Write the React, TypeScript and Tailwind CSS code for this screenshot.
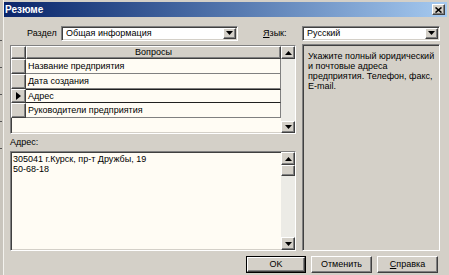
import React from 'react';

const sunken =
  'border border-t-[#808080] border-l-[#808080] border-b-white border-r-white shadow-[inset_1px_1px_0_#404040,inset_-1px_-1px_0_#d4d0c8]';
const raised =
  'border border-t-[#ffffff] border-l-[#ffffff] border-b-[#404040] border-r-[#404040] shadow-[inset_-1px_-1px_0_#808080]';

const Arrow: React.FC<{ dir: 'up' | 'down' }> = ({ dir }) => (
  <svg width="7" height="4" viewBox="0 0 7 4">
    {dir === 'down' ? <polygon points="0,0 7,0 3.5,4" fill="#000" /> : <polygon points="0,4 7,4 3.5,0" fill="#000" />}
  </svg>
);

const ArrowButton: React.FC<{ dir: 'up' | 'down'; className?: string }> = ({ dir, className = '' }) => (
  <div className={`bg-[#d4d0c8] flex items-center justify-center ${raised} ${className}`}>
    <Arrow dir={dir} />
  </div>
);

const Combo: React.FC<{ value: string; width: string }> = ({ value, width }) => (
  <div className={`${width} h-[15px] bg-white flex items-center ${sunken}`}>
    <span className="flex-1 pl-[4px] leading-none">{value}</span>
    <ArrowButton dir="down" className="w-[13px] h-[11px] mr-[1px]" />
  </div>
);

const questions = ['Название предприятия', 'Дата создания', 'Адрес', 'Руководители предприятия'];
const rowHeights = ['h-[15px]', 'h-[15px]', 'h-[14px]', 'h-[15px]'];
const hint = ['Укажите полный юридический', 'и почтовые адреса', 'предприятия. Телефон, факс,', 'E-mail.'];

export default function App() {
  return (
    <div className="w-[449px] h-[275px] flex bg-[#d4d0c8] overflow-hidden text-[9px] text-black font-['Liberation_Sans',Arial,sans-serif]">
      {/* edge of the window behind */}
      <div className="w-[3px] bg-[#c9c5bd] flex flex-col items-start pt-[40px] gap-[26px]">
        <div className="w-[2px] h-[1px] bg-[#555]" />
        <div className="w-[2px] h-[1px] bg-[#555]" />
        <div className="w-[2px] h-[1px] bg-[#555]" />
        <div className="w-[2px] h-[1px] bg-[#555]" />
        <div className="w-[2px] h-[1px] bg-[#555]" />
      </div>

      <div className="flex-1 flex flex-col border-l border-l-[#f4f3ef] pt-[2px]">
        {/* title bar */}
        <div className="h-[15px] mr-[2px] flex items-center justify-between bg-gradient-to-r from-[#0a246a] to-[#a6caf0]">
          <span className="pl-[1px] text-white font-bold text-[10px] leading-none">Резюме</span>
          <div className={`w-[13px] h-[11px] mr-[2px] bg-[#d4d0c8] flex items-center justify-center ${raised}`}>
            <svg width="7" height="6" viewBox="0 0 7 6">
              <path d="M0.5 0.5 L6.5 5.5 M6.5 0.5 L0.5 5.5" stroke="#000" strokeWidth="1.6" />
            </svg>
          </div>
        </div>

        {/* section / language row */}
        <div className="mt-[9px] h-[14px] flex items-center pl-[23px]">
          <span className="w-[34px] leading-none">Раздел</span>
          <Combo value="Общая информация" width="w-[177px]" />
          <span className="ml-[25px] w-[39px] leading-none">
            <span className="underline">Я</span>зык:
          </span>
          <Combo value="Русский" width="w-[138px]" />
        </div>

        {/* main area */}
        <div className="mt-[4px] h-[208px] flex pl-[6px]">
          <div className="w-[286px] flex flex-col">
            {/* questions grid */}
            <div className={`mt-[1px] h-[89px] flex bg-[#fffcf4] ${sunken}`}>
              <div className="flex-1 flex flex-col">
                <div className="h-[13px] flex">
                  <div className={`w-[15px] bg-[#d4d0c8] ${raised}`} />
                  <div className={`flex-1 bg-[#d4d0c8] flex items-center justify-center leading-none ${raised}`}>Вопросы</div>
                </div>
                {questions.map((q, i) => (
                  <div key={q} className={`${rowHeights[i]} flex`}>
                    <div className={`w-[15px] bg-[#d4d0c8] flex items-center justify-center ${raised}`}>
                      {i === 2 && (
                        <svg width="5" height="8" viewBox="0 0 5 8">
                          <polygon points="0,0 5,4 0,8" fill="#000" />
                        </svg>
                      )}
                    </div>
                    <div
                      className={`flex-1 flex items-center pl-[2px] leading-none border-r border-r-[#808080] ${
                        i === 2 ? 'border-y border-y-[#202020]' : 'border-b border-b-[#808080]'
                      }`}
                    >
                      {q}
                    </div>
                  </div>
                ))}
              </div>
              <div className="w-[14px] flex flex-col bg-[#ecebe6]">
                <ArrowButton dir="up" className="h-[13px]" />
                <div className="flex-1" />
                <ArrowButton dir="down" className="h-[12px]" />
              </div>
            </div>

            <div className="h-[17px] flex items-center leading-none">Адрес:</div>

            {/* address memo */}
            <div className={`h-[100px] flex bg-[#fffcf4] ${sunken}`}>
              <div className="flex-1 pl-[2px] pt-[2px] leading-[10px]">
                <div>305041 г.Курск, пр-т Дружбы, 19</div>
                <div>50-68-18</div>
              </div>
              <div className="w-[14px] flex flex-col bg-[#ecebe6]">
                <ArrowButton dir="up" className="h-[13px]" />
                <div className={`h-[11px] bg-[#d4d0c8] ${raised}`} />
                <div className="flex-1" />
                <ArrowButton dir="down" className="h-[13px]" />
              </div>
            </div>
          </div>

          {/* hint panel */}
          <div className={`ml-[6px] w-[138px] h-[207px] bg-[#d4d0c8] pl-[5px] pt-[6px] leading-[10px] whitespace-nowrap overflow-hidden ${sunken}`}>
            {hint.map(line => (
              <div key={line}>{line}</div>
            ))}
          </div>
        </div>

        {/* buttons */}
        <div className="mt-[4px] h-[17px] flex justify-end gap-[5px] pr-[11px]">
          <div className="w-[60px] h-[17px] border border-black">
            <div className={`h-full bg-[#d4d0c8] flex items-center justify-center leading-none ${raised}`}>OK</div>
          </div>
          <div className={`w-[61px] h-[17px] bg-[#d4d0c8] flex items-center justify-center leading-none ${raised}`}>Отменить</div>
          <div className={`w-[61px] h-[17px] bg-[#d4d0c8] flex items-center justify-center leading-none ${raised}`}>
            <span className="underline">С</span>правка
          </div>
        </div>
      </div>
    </div>
  );
}
